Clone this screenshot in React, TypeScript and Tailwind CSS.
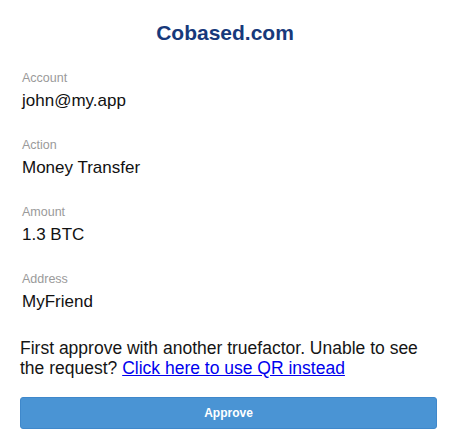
const fields = [
  { label: "Account", value: "john@my.app" },
  { label: "Action", value: "Money Transfer" },
  { label: "Amount", value: "1.3 BTC" },
  { label: "Address", value: "MyFriend" },
];

export default function App() {
  return (
    <div className="w-[450px] h-[444px] bg-white px-[20px] font-['Liberation_Sans',Arial,sans-serif] text-[#111]">
      <h1 className="pt-[21px] text-center text-[21px] leading-[24px] font-bold text-[#17397b]">
        Cobased.com
      </h1>

      <div className="mt-[25px] flex flex-col gap-[24px] pl-[2px]">
        {fields.map((f) => (
          <div key={f.label} className="flex flex-col">
            <span className="text-[12.5px] leading-[16px] text-[#9a9a9a]">{f.label}</span>
            <span className="mt-[3px] text-[17px] leading-[24px]">{f.value}</span>
          </div>
        ))}
      </div>

      <p className="mt-[24px] w-[417px] text-[17.5px] leading-[20px] text-[#151515]">
        First approve with another truefactor. Unable to see the request?{" "}
        <a href="#" className="text-[#0000ee] underline">
          Click here to use QR instead
        </a>
      </p>

      <button className="mt-[19px] flex h-[32px] w-[417px] items-center justify-center rounded-[3px] border border-[#3f88cb] bg-[#4a94d4] text-[12px] font-bold text-white">
        Approve
      </button>
    </div>
  );
}
